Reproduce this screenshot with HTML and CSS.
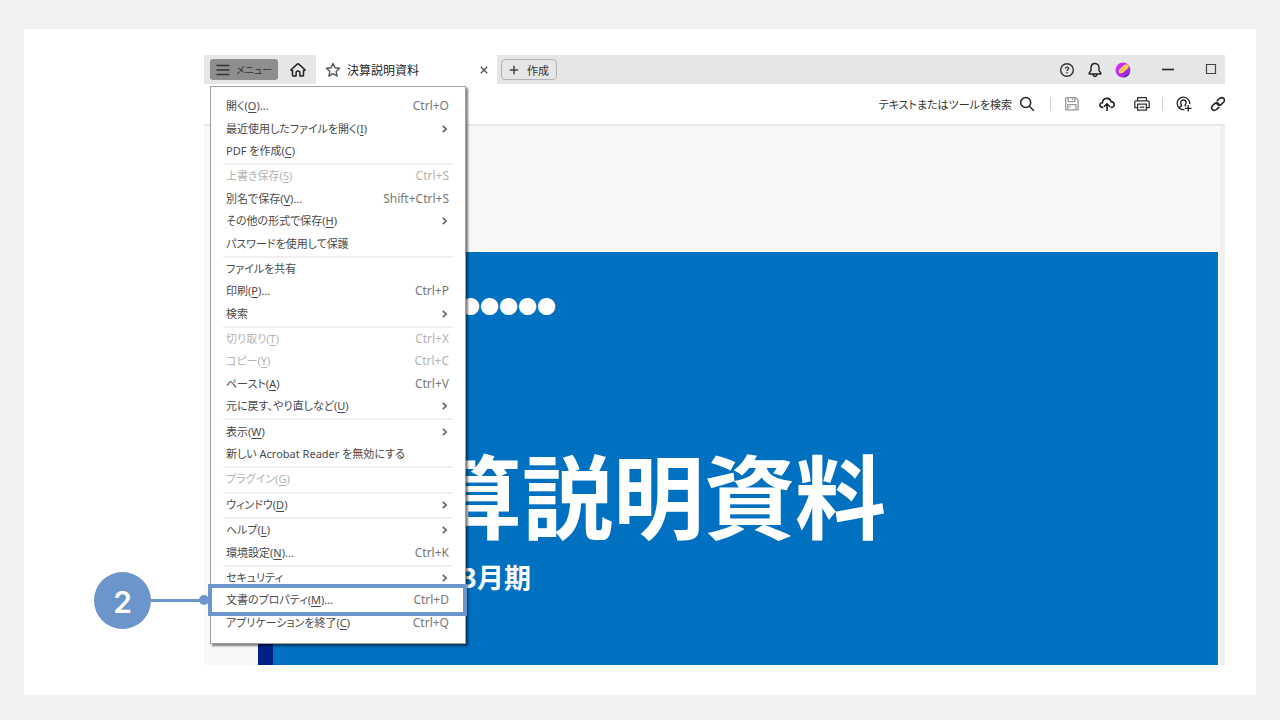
FILE: index.html
```html
<!DOCTYPE html>
<html lang="ja">
<head>
<meta charset="utf-8">
<meta name="viewport" content="width=device-width, initial-scale=1">
<title>決算説明資料</title>
<link rel="stylesheet" href="styles.css">
</head>
<body>
<svg class="sprite" aria-hidden="true">
  <symbol id="chev" viewBox="0 0 8 10"><path d="M1.800 1.800 5.200 5 1.800 8.200" fill="none" stroke="#666" stroke-width="1.700"/></symbol>
</svg>
<main class="card">
  <div class="app">
    <header class="titlebar">
      <button class="menu-button" type="button">
        <svg width="14" height="12" viewBox="0 0 14 12" aria-hidden="true"><path d="M.5 1.500h13M.5 6h13M.5 10.500h13" stroke="#333" stroke-width="1.500"/></svg>
        メニュー
      </button>
      <button class="icon-button home" type="button" aria-label="ホーム">
        <svg width="16" height="16" viewBox="0 0 16 16" fill="none" stroke="#222" stroke-width="1.500" stroke-linejoin="round" aria-hidden="true"><path d="M1.100 7.700 7.200 2.100q.8-.7 1.600 0l6.100 5.600c.3.4.1.9-.4.9h-1v4.600q0 .9-.9.9H9.900v-3.300a1.900 1.900 0 0 0-3.800 0v3.300H3.400q-.9 0-.9-.9V8.600h-1c-.5 0-.7-.5-.4-.9z"/></svg>
      </button>
      <div class="tab">
        <svg width="16" height="16" viewBox="0 0 16 16" fill="none" stroke="#555" stroke-width="1.400" stroke-linejoin="round" aria-hidden="true"><path d="m8 1.500 1.900 4.300 4.700.5-3.500 3.100 1 4.700L8 11.700l-4.100 2.400 1-4.700L1.400 6.300l4.700-.5z"/></svg>
        <span class="tab-name">決算説明資料</span>
        <button class="icon-button" type="button" aria-label="閉じる">
          <svg width="10" height="10" viewBox="0 0 10 10" aria-hidden="true"><path d="m1.800 1.800 6.400 6.400m0-6.400-6.400 6.400" stroke="#555" stroke-width="1.400"/></svg>
        </button>
      </div>
      <button class="create" type="button">
        <svg width="10" height="10" viewBox="0 0 10 10" aria-hidden="true"><path d="M5 .8v8.400M.8 5h8.400" stroke="#444" stroke-width="1.500"/></svg>
        作成
      </button>
      <div class="window-tools">
        <button class="icon-button" type="button" aria-label="ヘルプ">
          <svg width="16" height="16" viewBox="0 0 16 16" fill="none" stroke="#333" aria-hidden="true"><circle cx="8" cy="8" r="6.300" stroke-width="1.400"/><path d="M6.400 6.500q.1-1.400 1.600-1.400t1.600 1.300c0 1.100-1.600 1.100-1.600 2.500" stroke-width="1.300"/><path d="M8 9.900v1.300" stroke-width="1.400"/></svg>
        </button>
        <button class="icon-button" type="button" aria-label="通知">
          <svg width="16" height="16" viewBox="0 0 16 16" fill="none" stroke="#222" stroke-width="1.400" stroke-linejoin="round" aria-hidden="true"><path d="M8 1.500C5.200 1.500 4 3.600 4 6v2.600L2.200 11v1h11.600v-1L12 8.600V6c0-2.400-1.200-4.500-4-4.500zM6 12.200q.3 2.200 2 2.200t2-2.200"/></svg>
        </button>
        <button class="icon-button" type="button" aria-label="アカウント">
          <svg width="16" height="16" viewBox="0 0 16 16" aria-hidden="true"><defs><linearGradient id="ava" x1="0" y1="0" x2="1" y2="1"><stop offset="0" stop-color="#e92cf8"/><stop offset="1" stop-color="#8a2be0"/></linearGradient></defs><circle cx="8" cy="8" r="7.500" fill="url(#ava)"/><path d="M8 15.500 15 10.500a7.500 7.500 0 0 1-7 5z" fill="#5a2e9d"/><path d="M4 11.300c-.6-2.500 0-3.600 2-5.300l3.200-3c1.700-1.400 4-.7 4.400 1.100.2 1.100-.2 1.800-1 2.500L9.200 9.500c-1.900 1.700-3 1.900-5.200 1.800z" fill="#ffd94f"/><path d="m5.500 9.300 2.900-2.700M9 5.200l.6.600m1.400-2 .6.600" stroke="#b5872c" stroke-width=".8"/></svg>
        </button>
        <button class="icon-button minimize" type="button" aria-label="最小化">
          <svg width="14" height="12" viewBox="0 0 14 12" aria-hidden="true"><path d="M1 5.500h12" stroke="#222" stroke-width="1.600"/></svg>
        </button>
        <button class="icon-button maximize" type="button" aria-label="最大化">
          <svg width="12" height="12" viewBox="0 0 12 12" aria-hidden="true"><path d="M1.500.5h9v9h-9z" fill="none" stroke="#444" stroke-width="1.200"/></svg>
        </button>
      </div>
    </header>

    <div class="toolbar">
      <button class="search" type="button">テキストまたはツールを検索
        <svg width="16" height="16" viewBox="0 0 16 16" fill="none" stroke="#222" stroke-width="1.500" aria-hidden="true"><circle cx="6.700" cy="6.500" r="5"/><path d="m10.300 10.300 4.600 4.400"/></svg>
      </button>
      <div class="tool-group files">
        <button class="icon-button" type="button" aria-label="保存" disabled>
          <svg width="16" height="16" viewBox="0 0 16 16" fill="none" stroke="#999" stroke-width="1.300" stroke-linejoin="round" aria-hidden="true"><path d="M2.200 1.700h9.500l2.400 2.400v9.700H1.700V2.200q0-.5.500-.5z"/><path d="M4.300 2v3.600h6.500V2M3.800 13.500V8.600h8.200v4.900M8.500 2.500v1.800M6 10.200v1.600"/></svg>
        </button>
        <button class="icon-button" type="button" aria-label="クラウドにアップロード">
          <svg width="16" height="16" viewBox="0 0 16 16" fill="none" stroke="#222" stroke-width="1.600" aria-hidden="true"><path d="M4.300 11.400H3.300C-.3 10.500.6 6.800 3.500 6.700 3.900 1.300 11 1 12 5.600c3.900.1 4.400 5.500.6 5.800h-.9M8 15V8M5 10.800 8 7.800l3 3"/></svg>
        </button>
        <button class="icon-button" type="button" aria-label="印刷">
          <svg width="16" height="16" viewBox="0 0 16 16" fill="none" stroke="#333" stroke-width="1.300" stroke-linejoin="round" aria-hidden="true"><path d="M3.600 4.800V1.700h8.800v3.100M3.400 11.700H.8V6q0-1.200 1.300-1.200h11.800q1.300 0 1.300 1.200v5.700h-2.600M3.600 8.200h8.800v6H3.600zM5.700 11.200h4.600"/></svg>
        </button>
      </div>
      <div class="tool-group share">
        <button class="icon-button" type="button" aria-label="共有">
          <svg width="16" height="16" viewBox="0 0 16 16" fill="none" stroke="#222" stroke-width="1.300" aria-hidden="true"><path d="M8.500 13.600A6.300 6.300 0 1 1 13.700 8.200M3.300 11.800c.5-1.400 2.300-1 2.300-2.200 0-.8-.9-1.400-.9-3 0-3.500 5.400-3.500 5.400 0 0 1.600-1.400 2-1 3l.9.600M12.200 9v6.500M9 12.300h6.500"/></svg>
        </button>
        <button class="icon-button" type="button" aria-label="リンク">
          <svg width="16" height="16" viewBox="0 0 16 16" fill="none" stroke="#222" stroke-width="1.600" stroke-linecap="round" aria-hidden="true"><path d="M7.200 4.700 9.500 2.500c3-2.400 6.400.8 4.200 3.500l-2.400 2.300c-1.400 1.300-3.400 1-4.200-.5M8.800 11.300l-2.300 2.200c-3 2.400-6.400-.8-4.200-3.500l2.400-2.300c1.400-1.300 3.400-1 4.200.5"/></svg>
        </button>
      </div>
    </div>

    <div class="viewer">
      <article class="slide">
        <p class="company">●●●●●●</p>
        <h1>決算説明資料</h1>
        <p class="period">3月期</p>
      </article>
      <div class="scrollbar"></div>
    </div>
  </div>

  <ul class="menu">
    <li><button type="button">開く(<u>O</u>)...<kbd>Ctrl+O</kbd></button></li>
    <li><button type="button">最近使用したファイルを開く(<u>I</u>)<svg><use href="#chev"/></svg></button></li>
    <li><button type="button">PDF を作成(<u>C</u>)</button></li>
    <li class="line"></li>
    <li><button type="button" disabled>上書き保存(<u>S</u>)<kbd>Ctrl+S</kbd></button></li>
    <li><button type="button">別名で保存(<u>V</u>)...<kbd>Shift+Ctrl+S</kbd></button></li>
    <li><button type="button">その他の形式で保存(<u>H</u>)<svg><use href="#chev"/></svg></button></li>
    <li><button type="button">パスワードを使用して保護</button></li>
    <li class="line"></li>
    <li><button type="button">ファイルを共有</button></li>
    <li><button type="button">印刷(<u>P</u>)...<kbd>Ctrl+P</kbd></button></li>
    <li><button type="button">検索<svg><use href="#chev"/></svg></button></li>
    <li class="line"></li>
    <li><button type="button" disabled>切り取り(<u>T</u>)<kbd>Ctrl+X</kbd></button></li>
    <li><button type="button" disabled>コピー(<u>Y</u>)<kbd>Ctrl+C</kbd></button></li>
    <li><button type="button">ペースト(<u>A</u>)<kbd>Ctrl+V</kbd></button></li>
    <li><button type="button">元に戻す、やり直しなど(<u>U</u>)<svg><use href="#chev"/></svg></button></li>
    <li class="line"></li>
    <li><button type="button">表示(<u>W</u>)<svg><use href="#chev"/></svg></button></li>
    <li><button type="button">新しい Acrobat Reader を無効にする</button></li>
    <li class="line"></li>
    <li><button type="button" disabled>プラグイン(<u>G</u>)</button></li>
    <li class="line"></li>
    <li><button type="button">ウィンドウ(<u>D</u>)<svg><use href="#chev"/></svg></button></li>
    <li class="line"></li>
    <li><button type="button">ヘルプ(<u>L</u>)<svg><use href="#chev"/></svg></button></li>
    <li><button type="button">環境設定(<u>N</u>)...<kbd>Ctrl+K</kbd></button></li>
    <li class="line"></li>
    <li><button type="button">セキュリティ<svg><use href="#chev"/></svg></button></li>
    <li class="marked"><button type="button">文書のプロパティ(<u>M</u>)...<kbd>Ctrl+D</kbd></button>
      <div class="callout"><span class="step">2</span><span class="lead"></span></div>
    </li>
    <li><button type="button">アプリケーションを終了(<u>C</u>)<kbd>Ctrl+Q</kbd></button></li>
  </ul>
</main>
</body>
</html>
```
FILE: styles.css
```css
* {
  box-sizing: border-box;
}

body {
  margin: 0;
  min-height: 100vh;
  padding: 29px 24px 25px;
  display: flex;
  background: #f1f1f1;
  color: #333;
  font-family: "Noto Sans", "Noto Sans CJK JP", sans-serif;
  font-size: 12px;
}

button {
  font: inherit;
  color: inherit;
  background: none;
  border: 0;
  padding: 0;
}

svg {
  display: block;
  flex: none;
}

.sprite {
  position: absolute;
  width: 0;
  height: 0;
}

.card {
  position: relative;
  flex: 1;
  display: flex;
  padding: 26px 31px 30px 180px;
  background: #fff;
}

.app {
  flex: 1;
  min-width: 0;
  display: flex;
  flex-direction: column;
  overflow: hidden;
}

.titlebar {
  height: 29px;
  flex: none;
  display: flex;
  align-items: center;
  padding: 0 8px 0 6px;
  background: #e6e6e6;
}

.menu-button {
  display: flex;
  align-items: center;
  gap: 6px;
  width: 68px;
  height: 21px;
  padding-left: 6px;
  border-radius: 3px;
  background: #8e8e8e;
  font-size: 10px;
  white-space: nowrap;
  font-feature-settings: "palt";
}

.icon-button {
  flex: none;
}

.home {
  margin: 0 10px 0 12px;
}

.tab {
  display: flex;
  align-items: center;
  align-self: stretch;
  gap: 6px;
  width: 181px;
  padding: 0 8px 0 9px;
  background: #fff;
  color: #222;
}

.tab-name {
  flex: 1;
}

.create {
  display: flex;
  align-items: center;
  justify-content: center;
  gap: 8px;
  width: 56px;
  height: 21px;
  margin-left: 4px;
  border: 1px solid #b4b4b4;
  border-radius: 4px;
  font-size: 11px;
}

.window-tools {
  display: flex;
  align-items: center;
  gap: 12px;
  margin-left: auto;
}

.minimize {
  margin-left: 18px;
}

.maximize {
  margin-left: 18px;
}

.toolbar {
  height: 42px;
  flex: none;
  display: flex;
  align-items: center;
  justify-content: flex-end;
  border-bottom: 2px solid #e8e8e8;
}

.search {
  display: flex;
  align-items: center;
  gap: 7px;
  margin-right: 15px;
  font-size: 11px;
  font-feature-settings: "palt";
}

.tool-group {
  display: flex;
  align-items: center;
  height: 14px;
  padding-left: 13px;
  border-left: 1px solid #d4d4d4;
}

.files {
  gap: 19px;
  padding-right: 12px;
}

.share {
  gap: 18px;
}

.share .icon-button:last-child {
  margin-right: -1px;
}

.viewer {
  flex: 1;
  min-height: 0;
  display: flex;
  background: #f8f8f8;
}

.slide {
  flex: 1;
  margin: 126px 2px 0 54px;
  padding: 41px 0 0 67px;
  border-left: 15px solid #002288;
  background: #0070c0;
  color: #fff;
  font-family: "Noto Sans CJK JP", sans-serif;
  overflow: hidden;
}

.company {
  margin: 0;
  padding-left: 102px;
  font-size: 19px;
  line-height: 26px;
}

.slide h1 {
  margin: 108px 0 0;
  font-size: 91px;
  line-height: 130px;
  font-weight: 700;
}

.period {
  margin: 0;
  padding: 6px 0 0 121px;
  font-size: 27px;
  line-height: 28px;
  font-weight: 700;
}

.scrollbar {
  width: 5px;
  background: #efefef;
}

.menu {
  position: absolute;
  top: 57px;
  bottom: 51px;
  left: 186px;
  width: 256px;
  margin: 0;
  padding: 8px 12px 9px;
  display: flex;
  flex-direction: column;
  list-style: none;
  background: #fff;
  border: 1px solid #a0a0a0;
  box-shadow: 2px 2px 2px rgba(0, 0, 0, 0.5);
  color: #4a4a4a;
}

.menu li {
  position: relative;
  flex: 1;
  display: flex;
}

.menu .line {
  flex: 0 0 3px;
  border-bottom: 2px solid #f1f1f1;
}

.menu button {
  flex: 1;
  display: flex;
  align-items: center;
  padding: 0 4px 0 3px;
  font-size: 11px;
  line-height: 20px;
  white-space: pre;
  font-feature-settings: "palt";
}

.menu button:disabled {
  color: #b4b4b4;
}

.menu u {
  text-underline-offset: 2px;
}

.menu kbd {
  margin-left: auto;
  font: inherit;
  font-size: 12px;
  color: #777;
}

.menu :disabled kbd {
  color: #b4b4b4;
}

.menu svg {
  width: 8px;
  height: 10px;
  margin-left: auto;
}

.marked::after {
  content: "";
  position: absolute;
  inset: -5px -14px -4px -15px;
  border: 4px solid #6c96cb;
}

.callout {
  position: absolute;
  top: -17px;
  right: 100%;
  display: flex;
  align-items: center;
  margin-right: 15px;
}

.step {
  width: 57px;
  height: 57px;
  border-radius: 50%;
  background: #6c96cb;
  color: #fff;
  font: 600 30px/60px Inter, sans-serif;
  text-align: center;
}

.lead {
  position: relative;
  width: 57px;
  height: 3px;
  background: #6c96cb;
}

.lead::after {
  content: "";
  position: absolute;
  top: -4px;
  right: -1px;
  width: 10px;
  height: 10px;
  border-radius: 50%;
  background: #6c96cb;
}
```
